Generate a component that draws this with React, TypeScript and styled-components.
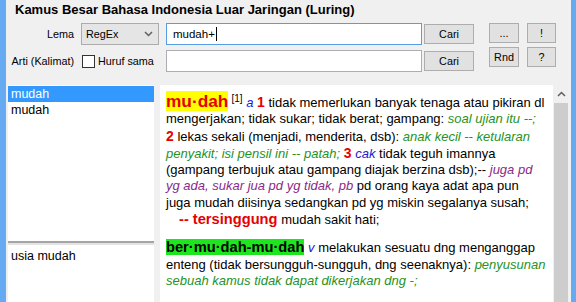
import styled, { createGlobalStyle } from 'styled-components';

const GlobalStyle = createGlobalStyle`
  html, body {
    margin: 0;
    padding: 0;
    height: 100%;
  }
  body {
    background: #f0f0f0;
    font-family: "Liberation Sans", Arial, sans-serif;
    overflow: hidden;
  }
  #root {
    height: 100%;
  }
`;

const Window = styled.div`
  height: 302px;
  box-sizing: border-box;
  display: flex;
  flex-direction: column;
  border-left: 6px solid #66abf2;
  border-right: 5px solid #66abf2;
  background: #f0f0f0;
`;

const Title = styled.h1`
  margin: 2px 0 0 9px;
  font-size: 13px;
  font-weight: 700;
  line-height: 16px;
  color: #000;
`;

const Form = styled.div`
  display: flex;
  align-items: flex-start;
  margin-top: 5px;
`;

const Fields = styled.div`
  display: grid;
  grid-template-columns: 75px 85px 258px 50px;
  grid-template-rows: 22px 22px;
  row-gap: 5px;
  align-items: center;
`;

const Label = styled.label`
  text-align: right;
  padding-right: 7px;
  font-size: 10.8px;
  color: #000;
`;

const Select = styled.div`
  width: 78px;
  height: 22px;
  box-sizing: border-box;
  display: flex;
  align-items: center;
  justify-content: space-between;
  padding: 0 5px 0 4px;
  background: #e5e5e5;
  border: 1px solid #acacac;
  font-size: 10.8px;
`;

const Check = styled.div`
  display: flex;
  align-items: center;
  gap: 3px;
  padding-left: 1px;
  font-size: 10.8px;
`;

const Box = styled.span`
  width: 13px;
  height: 13px;
  box-sizing: border-box;
  background: #fff;
  border: 1px solid #333;
`;

const TextBox = styled.div<{ $focused?: boolean }>`
  width: 256px;
  height: 22px;
  box-sizing: border-box;
  display: flex;
  align-items: center;
  padding-left: 6px;
  background: #fff;
  border: 1px solid ${(p) => (p.$focused ? '#569de5' : '#abadb3')};
  font-size: 11.5px;
`;

const Caret = styled.span`
  width: 1px;
  height: 14px;
  margin-left: 1px;
  background: #000;
`;

const Button = styled.button`
  height: 20px;
  box-sizing: border-box;
  padding: 0;
  background: #e1e1e1;
  border: 1px solid #adadad;
  font-family: "Liberation Sans", Arial, sans-serif;
  font-size: 10.8px;
  font-weight: 400;
  color: #000;
`;

const Tools = styled.div`
  display: grid;
  grid-template-columns: 30px 29px;
  grid-auto-rows: 20px;
  column-gap: 8px;
  row-gap: 4px;
  margin-left: 15px;
`;

const Main = styled.div`
  flex: 1;
  min-height: 0;
  display: flex;
  margin-top: 13px;
  padding-left: 2px;
`;

const Side = styled.div`
  width: 146px;
  display: flex;
  flex-direction: column;
  margin-right: 6px;
`;

const List = styled.ul<{ $grow?: boolean }>`
  margin: 0;
  padding: 0;
  list-style: none;
  background: #fff;
  box-sizing: border-box;
  height: ${(p) => (p.$grow ? 'auto' : '156px')};
  flex: ${(p) => (p.$grow ? 1 : 'none')};
  padding-top: ${(p) => (p.$grow ? '3px' : '1px')};
`;

const Item = styled.li<{ $selected?: boolean }>`
  height: 16px;
  line-height: 16px;
  padding-left: 3px;
  font-size: 12.5px;
  background: ${(p) => (p.$selected ? '#3399ff' : 'transparent')};
  color: ${(p) => (p.$selected ? '#fff' : '#000')};
`;

const Splitter = styled.div`
  height: 4px;
  box-sizing: border-box;
  border-top: 2px solid #a5a5a5;
  background: #e3e3e3;
`;

const Article = styled.div`
  flex: 1;
  min-width: 0;
  overflow: hidden;
  padding: 8px 2px 0 6px;
  background: #fff;
  font-size: 13px;
  line-height: 16.3px;
  white-space: nowrap;
  color: #000;
`;

const Entry = styled.p`
  margin: 0 0 11px;
`;

const Headword = styled.span`
  font-size: 17.3px;
  font-weight: 700;
  color: #e60000;
  background: #ffff00;
`;

const Derived = styled.span`
  font-size: 14.67px;
  font-weight: 700;
  color: #000;
  background: #1ee61e;
`;

const Sup = styled.sup`
  font-size: 10px;
  margin-left: 3px;
  vertical-align: 5px;
  line-height: 0;
`;

const Num = styled.b`
  font-size: 14px;
  color: #e60000;
`;

const Tag = styled.i`
  color: #1a1ad6;
`;

const Example = styled.i<{ $tone?: 'green' | 'purple' }>`
  color: ${(p) => (p.$tone === 'purple' ? '#8a2a8a' : '#259325')};
`;

const Sub = styled.div`
  padding-left: 13px;
`;

const SubWord = styled.b`
  font-size: 14.67px;
  color: #e60000;
`;

const Scrollbar = styled.div`
  width: 18px;
  display: flex;
  flex-direction: column;
  background: #f0f0f0;
`;

const Arrow = styled.div`
  height: 18px;
  display: flex;
  align-items: center;
  justify-content: center;
  padding-right: 2px;
`;

const Thumb = styled.div`
  flex: 1;
  margin: 0 3px 0 1px;
  background: #cdcdcd;
`;

function Chevron({ up }: { up?: boolean }) {
  return (
    <svg width="9" height="6" viewBox="0 0 9 6">
      <path
        d={up ? 'M1 5 L4.5 1.5 L8 5' : 'M1 1 L4.5 4.5 L8 1'}
        fill="none"
        stroke="#606060"
        strokeWidth="1.5"
      />
    </svg>
  );
}

export default function App() {
  return (
    <>
      <GlobalStyle />
      <Window>
        <Title>Kamus Besar Bahasa Indonesia Luar Jaringan (Luring)</Title>
        <Form>
          <Fields>
            <Label>Lema</Label>
            <Select>
              <span>RegEx</span>
              <Chevron />
            </Select>
            <TextBox $focused>
              mudah+
              <Caret />
            </TextBox>
            <Button type="button">Cari</Button>

            <Label>Arti (Kalimat)</Label>
            <Check>
              <Box />
              <span>Huruf sama</span>
            </Check>
            <TextBox />
            <Button type="button">Cari</Button>
          </Fields>
          <Tools>
            <Button type="button">...</Button>
            <Button type="button">!</Button>
            <Button type="button">Rnd</Button>
            <Button type="button">?</Button>
          </Tools>
        </Form>
        <Main>
          <Side>
            <List>
              <Item $selected>mudah</Item>
              <Item>mudah</Item>
            </List>
            <Splitter />
            <List $grow>
              <Item>usia mudah</Item>
            </List>
          </Side>
          <Article>
            <Entry>
              <Headword>mu·dah</Headword>
              <Sup>[1]</Sup> <Tag>a</Tag> <Num>1</Num> tidak memerlukan banyak tenaga atau pikiran dl
              <br />
              mengerjakan; tidak sukar; tidak berat; gampang: <Example>soal ujian itu --;</Example>
              <br />
              <Num>2</Num> lekas sekali (menjadi, menderita, dsb): <Example>anak kecil -- ketularan</Example>
              <br />
              <Example>penyakit; isi pensil ini -- patah;</Example> <Num>3</Num> <Tag>cak</Tag> tidak teguh imannya
              <br />
              (gampang terbujuk atau gampang diajak berzina dsb);-- <Example $tone="purple">juga pd</Example>
              <br />
              <Example $tone="purple">yg ada, sukar jua pd yg tidak, pb</Example> pd orang kaya adat apa pun
              <br />
              juga mudah diisinya sedangkan pd yg miskin segalanya susah;
              <Sub>
                <SubWord>-- tersinggung</SubWord> mudah sakit hati;
              </Sub>
            </Entry>
            <Entry>
              <Derived>ber·mu·dah-mu·dah</Derived> <Tag>v</Tag> melakukan sesuatu dng menganggap
              <br />
              enteng (tidak bersungguh-sungguh, dng seenaknya): <Example>penyusunan</Example>
              <br />
              <Example>sebuah kamus tidak dapat dikerjakan dng -;</Example>
            </Entry>
          </Article>
          <Scrollbar>
            <Arrow>
              <Chevron up />
            </Arrow>
            <Thumb />
          </Scrollbar>
        </Main>
      </Window>
    </>
  );
}
